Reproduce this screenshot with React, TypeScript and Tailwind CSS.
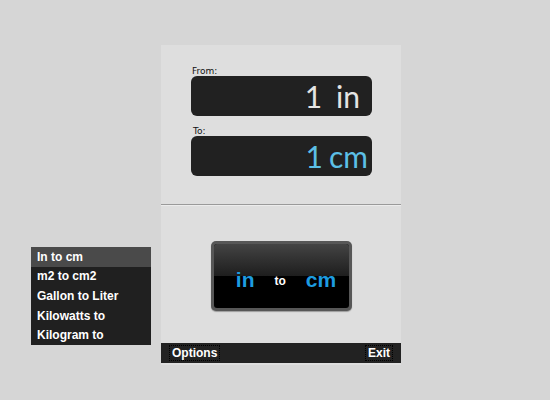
import React from 'react';

const menuItems = ['In to cm', 'm2 to cm2', 'Gallon to Liter', 'Kilowatts to', 'Kilogram to'];

const ValueBox = ({ value, unit, blue }: { value: string; unit: string; blue?: boolean }) => (
  <div
    className={`h-[40px] w-[181px] rounded-[6px] bg-[#212121] flex items-center justify-end pr-[4px] text-[30px] font-normal leading-none ${
      blue ? 'text-[#5cbfe6]' : 'text-[#e4e4e4]'
    }`}
    style={{ fontFamily: 'Lato, "Open Sans", sans-serif' }}
  >
    <span className={blue ? 'mr-[6px]' : 'mr-[14px]'}>{value}</span>
    <span className={blue ? '' : 'mr-[8px]'}>{unit}</span>
  </div>
);

const App = () => {
  return (
    <div
      className="relative w-[550px] h-[400px] bg-[#d6d6d6] overflow-hidden"
      style={{ fontFamily: '"Liberation Sans", Arial, sans-serif' }}
    >
      <div className="absolute left-[161px] top-[45px] w-[240px] h-[320px] bg-[#dedede] flex flex-col">
        <div className="h-[159px] flex flex-col pl-[30px] pt-[21px]">
          <div className="text-[9px] leading-[10px] text-[#111] ml-[1px]" style={{ fontFamily: '"DejaVu Sans", sans-serif' }}>From:</div>
          <ValueBox value="1" unit="in" />
          <div className="text-[9px] leading-[10px] text-[#111] ml-[2px] mt-[10px]" style={{ fontFamily: '"DejaVu Sans", sans-serif' }}>To:</div>
          <ValueBox value="1" unit="cm" blue />
        </div>
        <div className="h-[1px] bg-[#9a9a9a]" />
        <div className="h-[1px] bg-[#ececec]" />
        <div className="flex-1 flex items-start justify-center pt-[35px]">
          <div className="w-[141px] h-[70px] rounded-[5px] bg-[#575757] p-[3px] shadow-[0_1px_1px_rgba(0,0,0,0.3)]">
            <div className="relative w-full h-full rounded-[3px] bg-black overflow-hidden flex items-center justify-center gap-[20px] pt-[8px] pl-[10px]">
              <div className="absolute left-0 right-0 top-0 h-[32px] bg-gradient-to-b from-[#444] to-[#1e1e1e]" />
              <span className="relative text-[21px] font-bold text-[#1d9ce0]">in</span>
              <span className="relative text-[12px] font-bold text-white mt-[2px]">to</span>
              <span className="relative text-[21px] font-bold text-[#1d9ce0]">cm</span>
            </div>
          </div>
        </div>
        <div className="h-[20px] bg-[#222] flex items-center justify-between px-[8px] mb-[2px]">
          <span className="border border-dotted border-black px-[2px] text-[12px] leading-[14px] font-bold text-white">Options</span>
          <span className="border border-dotted border-black px-[2px] text-[12px] leading-[14px] font-bold text-white">Exit</span>
        </div>
      </div>

      <div className="absolute left-[31px] top-[247px] w-[120px] bg-[#202020] flex flex-col">
        {menuItems.map((item, i) => (
          <div
            key={item}
            className={`h-[19.6px] flex items-center pl-[6px] text-[12px] font-bold text-white ${i === 0 ? 'bg-[#4a4a4a]' : ''}`}
          >
            {item}
          </div>
        ))}
      </div>
    </div>
  );
};

export default App;
